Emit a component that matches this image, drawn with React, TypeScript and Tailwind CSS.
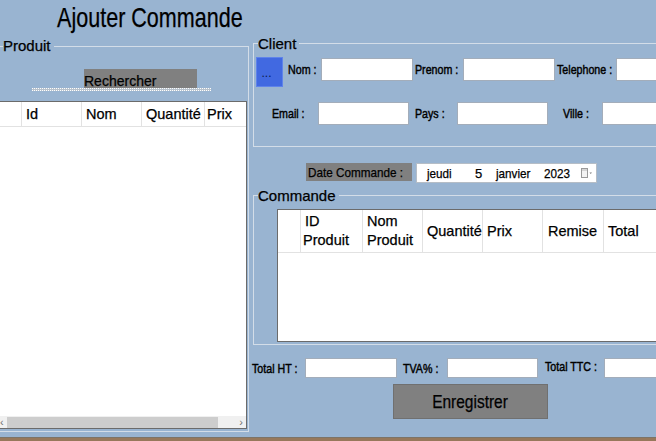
import React from "react";

function Field({ className }: { className: string }) {
  return <div className={"shrink-0 bg-white border border-[#a3adba] " + className} />;
}

function Lbl({ text, className }: { text: string; className: string }) {
  return (
    <div className={"shrink-0 flex items-center whitespace-nowrap text-[13px] leading-none text-black [-webkit-text-stroke:0.45px_#000] " + className}>
      <span className="inline-block origin-left scale-x-[0.82]">{text}</span>
    </div>
  );
}

function CalendarIcon() {
  return (
    <svg width="12" height="12" viewBox="0 0 12 12" className="shrink-0">
      <rect x="0.5" y="1.5" width="6" height="9" fill="#f4f4f4" stroke="#9a9a9a" />
      <line x1="1" y1="3" x2="6" y2="3" stroke="#b8b8b8" />
      <path d="M8.5 5.5 L11 5.5 L9.75 7 Z" fill="#7a7a7a" />
    </svg>
  );
}

export default function App() {
  return (
    <div className="w-[656px] h-[441px] overflow-hidden bg-[#99b4d1] flex flex-col font-['Liberation_Sans',Arial,sans-serif] text-black [-webkit-text-stroke:0.25px_#000]">
      <div className="h-[437px] shrink-0 flex flex-col">
        {/* Title */}
        <div className="h-[43px] shrink-0 pl-[57px] pt-[4px]">
          <h1 className="text-[28px] leading-none whitespace-nowrap">
            <span className="inline-block origin-left scale-x-[0.77]">Ajouter Commande</span>
          </h1>
        </div>

        <div className="flex items-start">
          {/* Produit group */}
          <div className="relative shrink-0 ml-[-2px] mt-[3px] w-[251px] h-[386px] border border-[#d3dde8] flex flex-col">
            <span className="absolute left-[4px] top-[-9px] bg-[#99b4d1] pr-[3px] text-[15px] leading-none">Produit</span>
            <div className="ml-[85px] mt-[22px] w-[113px] h-[19px] bg-[#808080] pt-[5px] text-[14px] leading-none whitespace-nowrap">
              Rechercher
            </div>
            <div className="ml-[33px] w-[179px] h-[3px] border-y border-dotted border-white bg-[#b9c3cd]" />
            <div className="mt-[10px] w-[248px] h-[328px] bg-white border border-[#6b6b6b] flex flex-col overflow-hidden">
              <div className="h-[25px] shrink-0 flex border-b border-[#e2e2e2] text-[14.5px] leading-none">
                <div className="w-[22px] shrink-0 border-r border-[#e2e2e2]" />
                <div className="w-[60px] shrink-0 border-r border-[#e2e2e2] pl-[4px] pt-[1px] flex items-center">Id</div>
                <div className="w-[60px] shrink-0 border-r border-[#e2e2e2] pl-[4px] pt-[1px] flex items-center">Nom</div>
                <div className="w-[63px] shrink-0 border-r border-[#e2e2e2] pl-[4px] pt-[1px] flex items-center overflow-hidden whitespace-nowrap">Quantité</div>
                <div className="w-[60px] shrink-0 pl-[2px] pt-[1px] flex items-center">Prix</div>
              </div>
              <div className="flex-1" />
              <div className="h-[12px] shrink-0 bg-[#f0f0f0] flex items-center text-[#707070] [-webkit-text-stroke:0px]">
                <span className="w-[7px] shrink-0 text-[11px] leading-none">‹</span>
                <div className="w-[211px] h-[11px] bg-[#cdcdcd] shrink-0" />
                <span className="flex-1 text-right pr-[3px] text-[11px] leading-none">›</span>
              </div>
            </div>
          </div>

          {/* Right column */}
          <div className="ml-[4px] w-[420px] shrink-0 flex flex-col">
            {/* Client group */}
            <div className="relative h-[104px] border border-[#d3dde8] pt-[13px] flex flex-col">
              <span className="absolute left-[4px] top-[-8px] bg-[#99b4d1] pr-[3px] text-[15px] leading-none">Client</span>
              <div className="flex items-start h-[30px]">
                <button className="ml-[2px] w-[27px] h-[30px] shrink-0 bg-[#4169e1] border border-[#5f83ea] flex items-end justify-center pb-[7px] pr-[6px] text-[12px] leading-none text-[#0a1a4a] [-webkit-text-stroke:0px]">
                  ...
                </button>
                <Lbl text="Nom :" className="w-[38px] h-[23px] mt-[1px] pl-[5px]" />
                <Field className="w-[92px] h-[23px] mt-[1px]" />
                <Lbl text="Prenom :" className="w-[50px] h-[23px] mt-[1px] pl-[2px]" />
                <Field className="w-[92px] h-[23px] mt-[1px]" />
                <Lbl text="Telephone :" className="w-[61px] h-[23px] mt-[1px] pl-[2px]" />
                <Field className="w-[100px] h-[23px] mt-[1px]" />
              </div>
              <div className="flex items-start h-[23px] mt-[15px]">
                <Lbl text="Email :" className="w-[64px] h-[23px] pl-[18px]" />
                <Field className="w-[91px] h-[23px]" />
                <Lbl text="Pays :" className="w-[48px] h-[23px] pl-[6px]" />
                <Field className="w-[91px] h-[23px]" />
                <Lbl text="Ville :" className="w-[54px] h-[23px] pl-[15px]" />
                <Field className="w-[100px] h-[23px]" />
              </div>
            </div>

            {/* Date row */}
            <div className="flex items-start mt-[16px] h-[20px]">
              <div className="ml-[53px] w-[106px] h-[18px] shrink-0 bg-[#808080] pl-[2px] flex items-center text-[13px] leading-none whitespace-nowrap">
                <span className="inline-block origin-left scale-x-[0.9]">Date Commande :</span>
              </div>
              <div className="ml-[4px] w-[181px] h-[20px] shrink-0 bg-white border border-[#b5bdc6] flex items-center pl-[10px] text-[13px] leading-none whitespace-nowrap">
                <span className="w-[48px] shrink-0"><span className="inline-block origin-left scale-x-[0.9]">jeudi</span></span>
                <span className="w-[21px] shrink-0">5</span>
                <span className="w-[48px] shrink-0"><span className="inline-block origin-left scale-x-[0.9]">janvier</span></span>
                <span className="w-[37px] shrink-0"><span className="inline-block origin-left scale-x-[0.9]">2023</span></span>
                <CalendarIcon />
              </div>
            </div>

            {/* Commande group */}
            <div className="relative mt-[12px] h-[150px] border border-[#d3dde8] pt-[13px] pl-[23px]">
              <span className="absolute left-[4px] top-[-8px] bg-[#99b4d1] pr-[3px] text-[15px] leading-none">Commande</span>
              <div className="w-[400px] h-[133px] bg-white border border-[#6b6b6b] flex flex-col">
                <div className="h-[43px] shrink-0 flex border-b border-[#e2e2e2] text-[14.5px] leading-[19px]">
                  <div className="w-[23px] shrink-0 border-r border-[#e2e2e2]" />
                  <div className="w-[62px] shrink-0 border-r border-[#e2e2e2] pl-[2px] flex flex-col justify-center">
                    <span className="pl-[2px]">ID</span>
                    <span>Produit</span>
                  </div>
                  <div className="w-[60px] shrink-0 border-r border-[#e2e2e2] pl-[4px] flex flex-col justify-center">
                    <span>Nom</span>
                    <span>Produit</span>
                  </div>
                  <div className="w-[60px] shrink-0 border-r border-[#e2e2e2] pl-[4px] flex items-center overflow-hidden whitespace-nowrap">Quantité</div>
                  <div className="w-[60px] shrink-0 border-r border-[#e2e2e2] pl-[4px] flex items-center">Prix</div>
                  <div className="w-[61px] shrink-0 border-r border-[#e2e2e2] pl-[5px] flex items-center">Remise</div>
                  <div className="w-[100px] shrink-0 pl-[4px] flex items-center">Total</div>
                </div>
              </div>
            </div>

            {/* Totals row */}
            <div className="flex items-center ml-[-1px] mt-[13px] h-[20px]">
              <Lbl text="Total HT :" className="w-[53px] h-[20px]" />
              <Field className="w-[92px] h-[20px]" />
              <Lbl text="TVA% :" className="w-[50px] h-[20px] pl-[6px]" />
              <Field className="w-[91px] h-[20px]" />
              <Lbl text="Total TTC :" className="w-[66px] h-[20px] pl-[7px] pb-[3px]" />
              <Field className="w-[100px] h-[20px]" />
            </div>

            <button className="mt-[6px] ml-[140px] w-[155px] h-[35px] bg-[#808080] border border-[#707070] flex items-center justify-center text-[18px] leading-none text-black">
              <span className="inline-block scale-x-[0.86]">Enregistrer</span>
            </button>
          </div>
        </div>
      </div>
      <div className="h-[4px] shrink-0 border-t border-[#7d7468] bg-[#97785b]" />
    </div>
  );
}
